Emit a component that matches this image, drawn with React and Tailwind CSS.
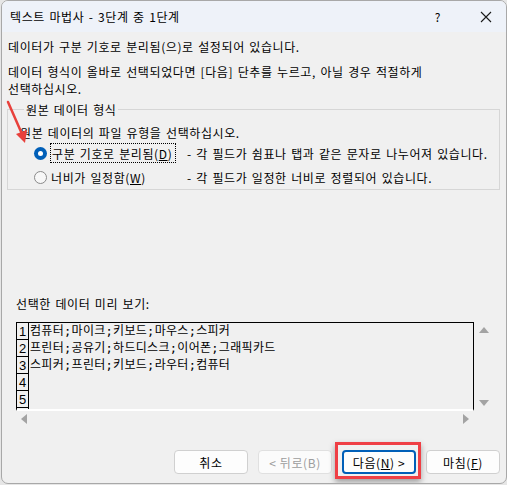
import React from "react";

const font = "font-['Noto_Sans_CJK_KR','Noto_Sans',sans-serif]";

function Radio({ checked }) {
  if (checked) {
    return (
      <span className="w-[13px] h-[13px] rounded-full bg-[#005fb8] flex items-center justify-center shrink-0">
        <span className="w-[5px] h-[5px] rounded-full bg-white" />
      </span>
    );
  }
  return <span className="block w-[13px] h-[13px] rounded-full border border-[#8a8a8a] bg-[#f7f7f7] shrink-0" />;
}

function Tri({ dir }) {
  const pts = {
    up: "0,6 5,0 10,6",
    down: "0,0 10,0 5,6",
    left: "6,0 6,10 0,5",
    right: "0,0 0,10 6,5",
  }[dir];
  const vert = dir === "up" || dir === "down";
  return (
    <svg width={vert ? 10 : 6} height={vert ? 6 : 10} viewBox={vert ? "0 0 10 6" : "0 0 6 10"}>
      <polygon points={pts} fill="#a3a3a3" />
    </svg>
  );
}

const rows = [
  "컴퓨터;마이크;키보드;마우스;스피커",
  "프린터;공유기;하드디스크;이어폰;그래픽카드",
  "스피커;프린터;키보드;라우터;컴퓨터",
  "",
  "",
  "",
];

export default function App() {
  return (
    <div className={`w-[507px] h-[485px] bg-[#e6e6e6] relative overflow-hidden text-[12px] text-black tracking-[0.6px] [word-spacing:1.2px] ${font}`}>
      <div className="ml-[1px] w-[506px] h-[484px] border border-[#a8a8a8] rounded-[7px] bg-[#f0f0f0] overflow-hidden flex flex-col">
        {/* title bar */}
        <div className="h-[31px] bg-[#eef2f9] flex items-center pl-[8px] shrink-0">
          <span className="flex-1 leading-[17px]">텍스트 마법사 - 3단계 중 1단계</span>
          <span className="w-[20px] text-center mr-[32px]">?</span>
          <svg width="12" height="12" viewBox="0 0 12 12" className="mr-[14px]">
            <path d="M1 1 L11 11 M11 1 L1 11" stroke="#1a1a1a" strokeWidth="1.1" />
          </svg>
        </div>

        {/* body */}
        <div className="flex-1 flex flex-col px-[6px] leading-[17px]">
          <p className="mt-[6px]">데이터가 구분 기호로 분리됨(으)로 설정되어 있습니다.</p>
          <p className="mt-[8px]">
            데이터 형식이 올바로 선택되었다면 [다음] 단추를 누르고, 아닐 경우 적절하게
            <br />
            선택하십시오.
          </p>

          <fieldset className="mt-[4px] ml-[-1px] border border-[#d6d6d6] pl-[12px] pb-[2px]">
            <legend className="ml-[4px] px-[2px] leading-[17px]">원본 데이터 형식</legend>
            <p className="mt-[6px]">원본 데이터의 파일 유형을 선택하십시오.</p>
            <div className="mt-[2px] flex items-center h-[20px]">
              <span className="ml-[14px] mr-[3px]"><Radio checked /></span>
              <span className="w-[126px] h-[20px] border border-dotted border-black flex items-center pl-[1px] whitespace-nowrap">
                구분 기호로 분리됨(<span className="underline">D</span>)
              </span>
              <span className="ml-[11px] whitespace-nowrap">- 각 필드가 쉼표나 탭과 같은 문자로 나누어져 있습니다.</span>
            </div>
            <div className="mt-[4px] flex items-center h-[20px]">
              <span className="ml-[14px] mr-[4px]"><Radio /></span>
              <span className="w-[126px] whitespace-nowrap">너비가 일정함(<span className="underline">W</span>)</span>
              <span className="ml-[10px] whitespace-nowrap">- 각 필드가 일정한 너비로 정렬되어 있습니다.</span>
            </div>
          </fieldset>

          <p className="mt-[105px] ml-[8px]">선택한 데이터 미리 보기:</p>

          <div className="mt-[10px] ml-[8px] flex">
            <div className="w-[458px] h-[89px] border-t border-l border-r border-black border-b-2 border-b-white overflow-hidden font-['DejaVu_Sans_Mono','Noto_Sans_CJK_KR',monospace] tracking-[0.3px]">
              {rows.map((r, i) => (
                <div key={i} className="flex h-[17px]">
                  <span className="w-[12px] border-r border-b border-black text-center leading-[17px] font-['Liberation_Sans',sans-serif] text-[13px] tracking-normal">
                    {i < 5 ? i + 1 : ""}
                  </span>
                  <span className="pl-[1px] leading-[17px] text-[12px]">{r}</span>
                </div>
              ))}
            </div>
            <div className="w-[17px] flex flex-col items-center justify-between py-[5px] ml-[1px]">
              <Tri dir="up" />
              <Tri dir="down" />
            </div>
          </div>
          <div className="ml-[8px] w-[458px] flex items-center justify-between h-[16px] px-[5px]">
            <Tri dir="left" />
            <Tri dir="right" />
          </div>

          <div className="mt-[23px] flex justify-end gap-[10px] relative">
            <button className="w-[74px] h-[24px] bg-[#fdfdfd] border border-[#d0d0d0] rounded-[4px] leading-[17px]">취소</button>
            <button className="w-[74px] h-[24px] bg-[#fbfbfb] border border-[#e0e0e0] rounded-[4px] text-[#9d9d9d] leading-[17px]">&lt; 뒤로(B)</button>
            <div className="relative">
              <button className="w-[74px] h-[24px] bg-[#fdfdfd] border-2 border-[#005fb8] rounded-[4px] leading-[17px]">
                다음(<span className="underline">N</span>) &gt;
              </button>
              <div className="absolute left-[-7px] top-[-8px] w-[86px] h-[37px] border-[3px] border-[#ef3f45] shadow-[0_3px_6px_rgba(0,0,0,0.35)]" />
            </div>
            <button className="w-[74px] h-[24px] bg-[#fdfdfd] border border-[#d0d0d0] rounded-[4px] leading-[17px]">
              마침(<span className="underline">F</span>)
            </button>
          </div>
        </div>
      </div>

      {/* red pointer arrow */}
      <svg className="absolute left-0 top-0" width="40" height="150" viewBox="0 0 40 150">
        <path d="M8 102 L22 134" stroke="#e8413c" strokeWidth="2.5" strokeLinecap="round" />
        <polygon points="16,134 27,130 25,143" fill="#e8413c" />
      </svg>
    </div>
  );
}
